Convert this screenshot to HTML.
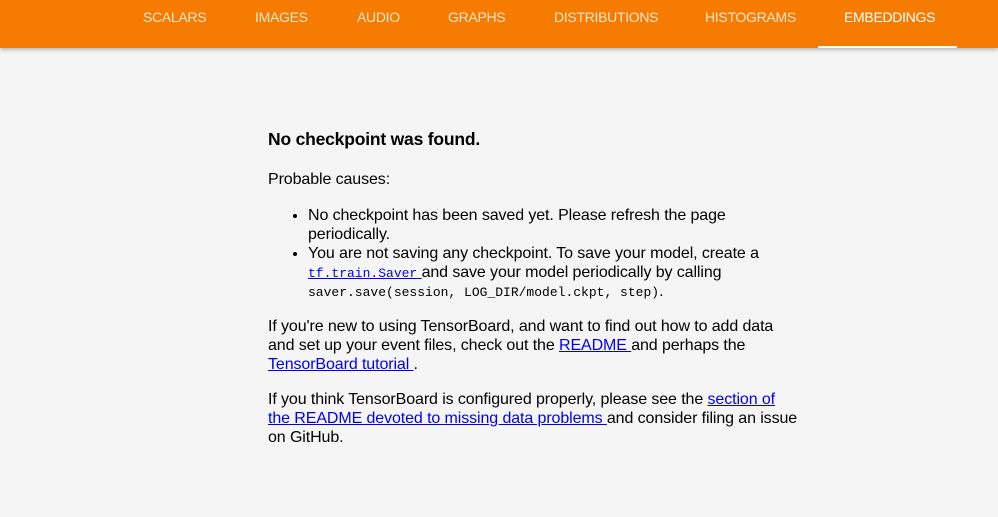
<!DOCTYPE html>
<html><head><style>
body{margin:0;width:998px;height:517px;background:#f5f5f5;font-family:"Liberation Sans",sans-serif;overflow:hidden;position:relative}
.bar{position:absolute;left:0;top:0;width:998px;height:48px;background:#f57c00;box-shadow:0 2px 4px rgba(0,0,0,.25)}
.t{position:absolute;top:9px;font-size:14px;letter-spacing:-0.3px;color:rgba(255,255,255,.8);white-space:nowrap}
.a{color:#fff}
.u{position:absolute;left:818px;top:46px;width:139px;height:2px;background:#fff}
.c{position:absolute;left:268px;top:128px;width:700px;font-size:16px;line-height:19px;color:#000;letter-spacing:-0.1px;white-space:nowrap}
h3{font-size:17.5px;margin:0 0 20px;line-height:22px;letter-spacing:-0.2px}
p{margin:0 0 16px}
p.pc{margin-bottom:17px}
ul{margin:0 0 16px;padding-left:40px}
a{color:#00e;text-decoration:underline}
code{font-family:"Liberation Mono",monospace;font-size:13px;line-height:1;letter-spacing:0}
</style></head><body>
<div class="bar">
<span class="t" style="left:143px">SCALARS</span>
<span class="t" style="left:255px">IMAGES</span>
<span class="t" style="left:357px">AUDIO</span>
<span class="t" style="left:448px">GRAPHS</span>
<span class="t" style="left:554px">DISTRIBUTIONS</span>
<span class="t" style="left:705px">HISTOGRAMS</span>
<span class="t a" style="left:844px">EMBEDDINGS</span>
<div class="u"></div>
</div>
<div class="c">
<h3>No checkpoint was found.</h3>
<p class="pc">Probable causes:</p>
<ul>
<li>No checkpoint has been saved yet. Please refresh the page<br>periodically.</li>
<li>You are not saving any checkpoint. To save your model, create a<br><a href="#"><code>tf.train.Saver</code> </a>and save your model periodically by calling<br><code>saver.save(session, LOG_DIR/model.ckpt, step)</code>.</li>
</ul>
<p>If you're new to using TensorBoard, and want to find out how to add data<br>and set up your event files, check out the <a href="#">README </a>and perhaps the<br><a href="#">TensorBoard tutorial </a>.</p>
<p>If you think TensorBoard is configured properly, please see the <a href="#">section of</a><br><a href="#">the README devoted to missing data problems </a>and consider filing an issue<br>on GitHub.</p>
</div>
</body></html>
